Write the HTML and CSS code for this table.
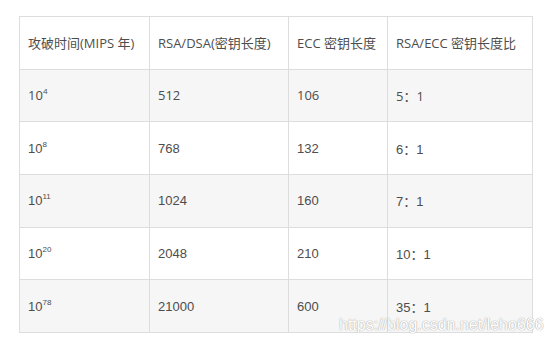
FILE: index.html
```html
<!DOCTYPE html>
<html lang="zh-CN">
<head>
    <meta charset="UTF-8">
    <title>RSA 与 ECC 密钥长度对比</title>
    <link rel="stylesheet" href="styles.css">
</head>
<body>
    <div class="wrap">
        <table class="key-table">
            <colgroup>
                <col class="c1">
                <col class="c2">
                <col class="c3">
                <col class="c4">
            </colgroup>
            <thead>
                <tr>
                    <th>攻破时间(MIPS 年)</th>
                    <th>RSA/DSA(密钥长度)</th>
                    <th>ECC 密钥长度</th>
                    <th>RSA/ECC 密钥长度比</th>
                </tr>
            </thead>
            <tbody>
                <tr class="first">
                    <td>10<sup>4</sup></td>
                    <td>512</td>
                    <td>106</td>
                    <td>5：1</td>
                </tr>
                <tr>
                    <td>10<sup>8</sup></td>
                    <td>768</td>
                    <td>132</td>
                    <td>6：1</td>
                </tr>
                <tr>
                    <td>10<sup>11</sup></td>
                    <td>1024</td>
                    <td>160</td>
                    <td>7：1</td>
                </tr>
                <tr>
                    <td>10<sup>20</sup></td>
                    <td>2048</td>
                    <td>210</td>
                    <td>10：1</td>
                </tr>
                <tr>
                    <td>10<sup>78</sup></td>
                    <td>21000</td>
                    <td>600</td>
                    <td>35：1</td>
                </tr>
            </tbody>
        </table>
        <div class="watermark">https://blog.csdn.net/leho666</div>
    </div>
</body>
</html>
```

FILE: styles.css
```css
body {
    margin: 0;
    background: #fff;
    font-family: "Open Sans", "Noto Sans CJK SC", sans-serif;
    color: #4d4d4d;
}

.wrap {
    position: relative;
    width: 551px;
    height: 346px;
    padding: 16px 0 0 19px;
    box-sizing: border-box;
}

/* Table grid */
.key-table {
    border-collapse: collapse;
    table-layout: fixed;
    width: 513px;
    font-size: 13px;
}

.c1 { width: 130px; }
.c2 { width: 139px; }
.c3 { width: 99px; }
.c4 { width: 145px; }

.key-table th,
.key-table td {
    border: 1px solid #ddd;
    height: 52.67px;
    padding: 0 8px;
    text-align: left;
    font-weight: normal;
    vertical-align: middle;
    box-sizing: border-box;
}

.key-table tbody tr:nth-child(odd) {
    background: #f6f6f6;
}

/* Rows after the first render with Arial-like digits */
.key-table tbody tr:not(.first) td {
    font-family: "Liberation Sans", "Noto Sans CJK SC", sans-serif;
}

.key-table sup {
    font-size: 8px;
    vertical-align: 6px;
    line-height: 0;
}

/* CSDN watermark over bottom-right corner */
.watermark {
    position: absolute;
    left: 339px;
    top: 316px;
    font-family: "Liberation Sans", sans-serif;
    font-size: 16px;
    color: #fff;
    text-shadow: 0 0 1px #aaa, 0 0 1px #aaa;
}
```
